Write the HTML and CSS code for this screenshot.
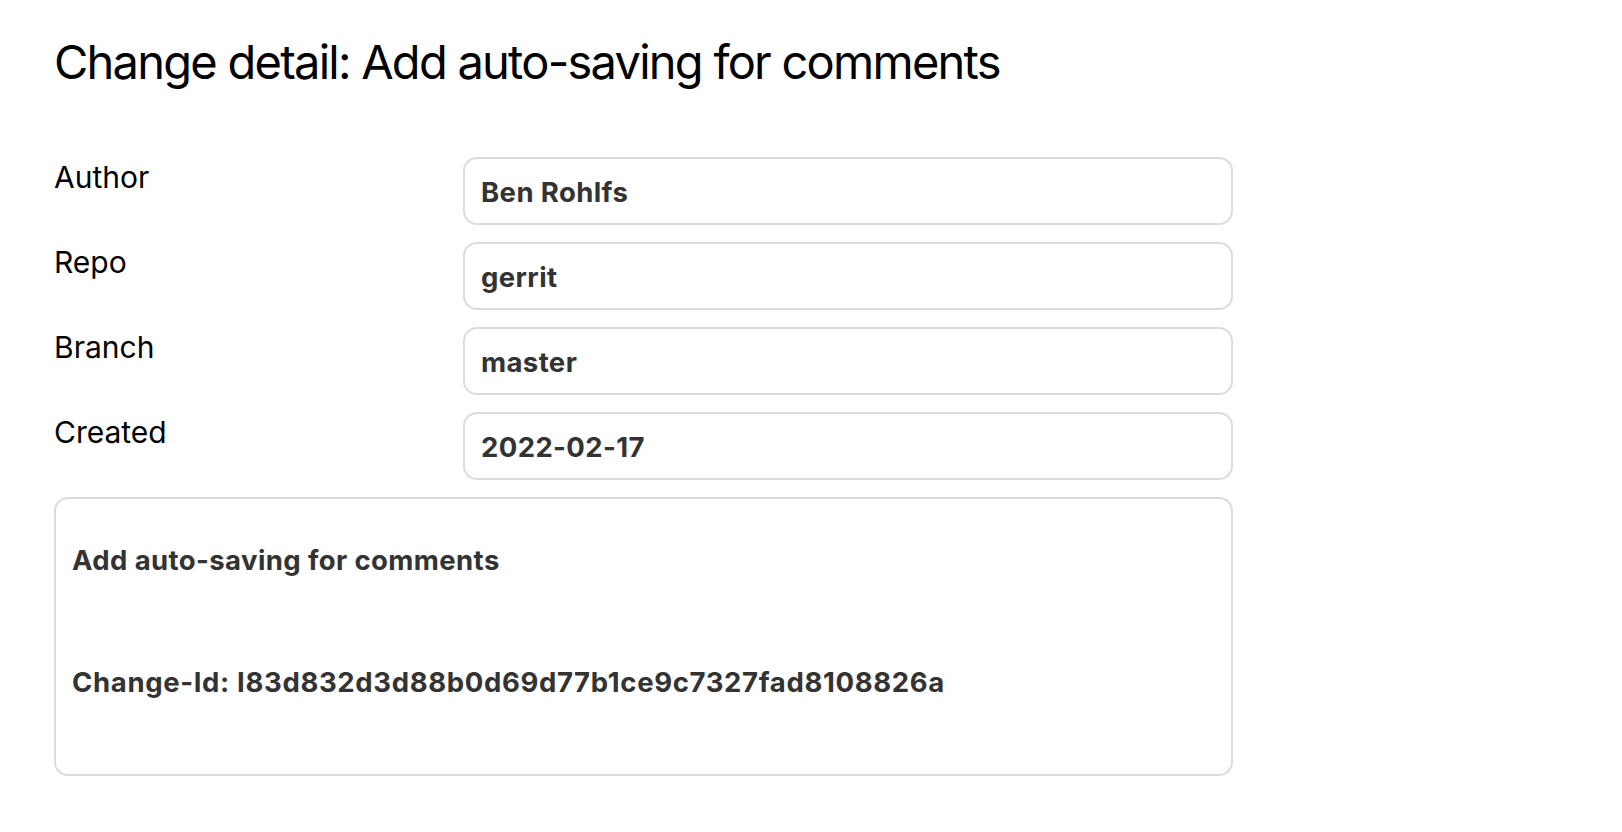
FILE: index.html
```html
<!DOCTYPE html>
<html lang="en">
<head>
<meta charset="utf-8">
<title>Change detail</title>
<link rel="stylesheet" href="styles.css">
</head>
<body>
<main class="page">
  <h1 class="title">Change detail: Add auto-saving for comments</h1>
  <div class="form">
    <div class="label">Author</div>
    <div class="field">Ben Rohlfs</div>
    <div class="label">Repo</div>
    <div class="field">gerrit</div>
    <div class="label">Branch</div>
    <div class="field">master</div>
    <div class="label">Created</div>
    <div class="field">2022-02-17</div>
    <div class="message">
      <p class="msg-line">Add auto-saving for comments</p>
      <p class="msg-line msg-gap">Change-Id: I83d832d3d88b0d69d77b1ce9c7327fad8108826a</p>
    </div>
  </div>
</main>
</body>
</html>
```
FILE: styles.css
```css
html, body {
  margin: 0;
  padding: 0;
  background: #ffffff;
}

body {
  font-family: Inter, "Noto Sans", sans-serif;
  color: #000;
}

.page {
  padding: 34px 0 0 54px;
  width: 1179px;
}

.title {
  margin: 0;
  font-size: 47px;
  line-height: 56px;
  font-weight: 400;
  letter-spacing: -1.75px;
  color: #000;
}

.form {
  margin-top: 67px;
  display: grid;
  grid-template-columns: 409px 1fr;
  row-gap: 17px;
}

.label {
  font-size: 30px;
  line-height: 36px;
  padding-top: 2px;
  color: #000;
}

.field {
  height: 68px;
  box-sizing: border-box;
  border: 2px solid #dcdcdc;
  border-radius: 14px;
  padding: 17px 16px 15px;
  font-size: 27.5px;
  line-height: 32px;
  font-weight: 700;
  letter-spacing: 0.4px;
  color: #333;
}

.message {
  grid-column: 1 / -1;
  height: 279px;
  box-sizing: border-box;
  border: 2px solid #dcdcdc;
  border-radius: 14px;
  padding: 41px 16px 0;
  font-size: 27.5px;
  line-height: 40.5px;
  font-weight: 700;
  letter-spacing: 0.4px;
  color: #333;
}

.msg-line {
  margin: 0;
}

.msg-gap {
  margin-top: 81px;
  letter-spacing: 0.65px;
}
```
